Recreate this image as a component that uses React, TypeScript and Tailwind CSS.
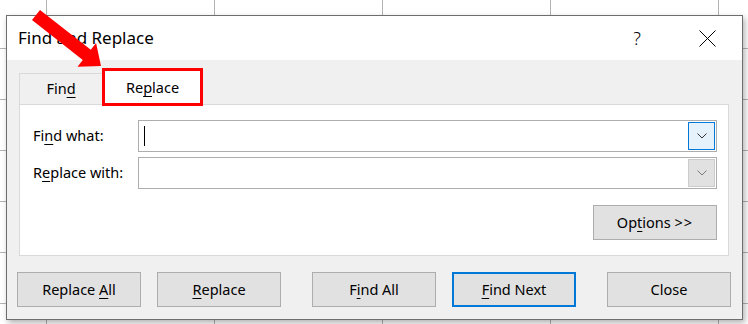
import { ReactNode } from "react";

const Key = ({ children }: { children: ReactNode }) => (
  <span className="underline decoration-1 underline-offset-[3px]">{children}</span>
);

const Btn = ({
  children,
  primary,
  className = "",
}: {
  children: ReactNode;
  primary?: boolean;
  className?: string;
}) => (
  <button
    className={`h-[35px] w-[124px] shrink-0 bg-[#e1e1e1] text-black ${
      primary ? "border-2 border-[#0078d7]" : "border border-[#adadad]"
    } ${className}`}
  >
    {children}
  </button>
);

const Chevron = ({ color }: { color: string }) => (
  <svg width="10" height="6" viewBox="0 0 10 6">
    <polyline points="0.5,0.5 5,5 9.5,0.5" fill="none" stroke={color} strokeWidth="1" />
  </svg>
);

const Combo = ({ active, children }: { active?: boolean; children?: ReactNode }) => (
  <div className="flex h-[32px] w-[579px] items-stretch border border-[#adadad] bg-white p-[1px]">
    <div className="flex flex-1 items-center pl-[4px]">{children}</div>
    <div
      className={`flex w-[27px] items-center justify-center border ${
        active ? "border-[#0078d7] bg-[#e5f1fb]" : "border-[#cccccc] bg-[#e1e1e1]"
      }`}
    >
      <Chevron color={active ? "#333333" : "#7a7a7a"} />
    </div>
  </div>
);

const App = () => {
  return (
    <div className="relative h-[324px] w-[748px] overflow-hidden bg-white bg-[linear-gradient(to_right,#b4b4b4_1px,transparent_1px),linear-gradient(to_bottom,#b4b4b4_1px,transparent_1px)] bg-[size:168px_51px] bg-[position:46px_48px] pt-[15px] font-['Noto_Sans',sans-serif] text-[14.5px] text-black">
      <div className="ml-[6px] flex h-[305px] w-[737px] flex-col border border-[#6e6e6e] bg-[#f0f0f0] shadow-[2px_3px_6px_rgba(0,0,0,0.3)]">
        {/* title bar */}
        <div className="flex h-[44px] items-center bg-white pl-[11px] pr-[12px]">
          <span className="text-[17px]">Find and Replace</span>
          <div className="flex-1" />
          <div className="mr-[24px] flex w-[46px] justify-center text-[18px] font-light">?</div>
          <div className="flex w-[46px] justify-center">
            <svg width="17" height="17" viewBox="0 0 17 17">
              <path d="M0.5 0.5 L16.5 16.5 M16.5 0.5 L0.5 16.5" stroke="#000" strokeWidth="1" />
            </svg>
          </div>
        </div>

        {/* body */}
        <div className="px-[12px] pt-[8px]">
          <div className="flex h-[36px] items-end">
            <div className="flex h-[31px] w-[83px] items-center justify-center border-l border-t border-[#d9d9d9] bg-[#f0f0f0]">
              Fin<Key>d</Key>
            </div>
            <div className="relative z-10 -mb-[2px] flex h-[38px] w-[101px] items-center justify-center border-[3px] border-[#ff0000] bg-white pt-[2px]">
              Re<Key>p</Key>lace
            </div>
          </div>
          <div className="flex h-[152px] w-[710px] flex-col border border-[#d9d9d9] bg-white pl-[13px] pr-[11px] pt-[15px]">
            <div className="flex items-center">
              <span className="w-[105px]">
                Fi<Key>n</Key>d what:
              </span>
              <Combo active>
                <div className="h-[20px] w-[1px] bg-black" />
              </Combo>
            </div>
            <div className="mt-[5px] flex items-center">
              <span className="w-[105px]">
                R<Key>e</Key>place with:
              </span>
              <Combo />
            </div>
            <Btn className="mt-[16px] self-end">
              Op<Key>t</Key>ions <span className="tracking-[1px]">&gt;&gt;</span>
            </Btn>
          </div>
        </div>

        {/* buttons */}
        <div className="mt-[16px] flex pl-[10px]">
          <Btn>
            Replace <Key>A</Key>ll
          </Btn>
          <Btn className="ml-[16px]">
            <Key>R</Key>eplace
          </Btn>
          <Btn className="ml-[31px]">
            F<Key>i</Key>nd All
          </Btn>
          <Btn primary className="ml-[16px]">
            <Key>F</Key>ind Next
          </Btn>
          <Btn className="ml-[31px]">Close</Btn>
        </div>
      </div>

      {/* red annotation arrow */}
      <svg className="pointer-events-none absolute left-0 top-0" width="120" height="80" viewBox="0 0 120 80">
        <polygon
          points="40,9.9 90.8,49.8 96.1,43.1 101,66 77.5,66.7 82.8,60 32,20.1"
          fill="#ff0000"
        />
      </svg>
    </div>
  );
};

export default App;
